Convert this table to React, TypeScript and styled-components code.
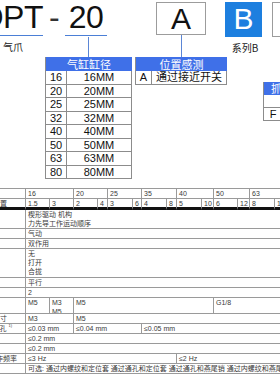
import React from "react";
import styled, { createGlobalStyle } from "styled-components";

const GlobalStyle = createGlobalStyle`
  html, body {
    margin: 0;
    padding: 0;
    background: #fff;
  }
  body {
    font-family: "Liberation Sans", "Noto Sans CJK SC", sans-serif;
  }
`;

const Page = styled.div`
  width: 280px;
  height: 380px;
  overflow: hidden;
  background: #fff;
`;

const Top = styled.div`
  display: flex;
  align-items: flex-start;
  height: 188px;
`;

const Lead = styled.div`
  width: 43px;
  padding-right: 2px;
  flex-shrink: 0;
  display: flex;
  flex-direction: column;
  align-items: flex-end;
`;

const Code = styled.div<{ $pad?: number }>`
  font-size: 32px;
  line-height: 35px;
  height: 35px;
  color: #111;
  border-bottom: 1.5px solid #4b7fd6;
  padding: 0 ${(p) => p.$pad ?? 0}px;
  white-space: nowrap;
  letter-spacing: -0.5px;
`;

const Caption = styled.div<{ $self?: string }>`
  align-self: ${(p) => p.$self ?? "center"};
  font-family: "Noto Sans CJK SC", sans-serif;
  font-size: 10px;
  line-height: 12px;
  color: #222;
  margin: 5px 0 0 3px;
  white-space: nowrap;
`;

const Group = styled.div<{ $w: number; $ml?: number }>`
  width: ${(p) => p.$w}px;
  margin-left: ${(p) => p.$ml ?? 0}px;
  flex-shrink: 0;
  display: flex;
  flex-direction: column;
`;

const HeadRow = styled.div<{ $h: number; $center?: boolean }>`
  height: ${(p) => p.$h}px;
  display: flex;
  align-items: flex-start;
  justify-content: ${(p) => (p.$center ? "center" : "flex-start")};
`;

const Dash = styled.span`
  font-size: 32px;
  line-height: 35px;
  color: #333;
  margin: 0 5px 0 4px;
`;

const Stem = styled.div<{ $h: number }>`
  width: 1px;
  height: ${(p) => p.$h}px;
  background: #5b86d6;
  align-self: center;
`;

const Box = styled.div<{ $fill?: boolean; $w: number; $h: number; $ml?: number }>`
  box-sizing: border-box;
  width: ${(p) => p.$w}px;
  height: ${(p) => p.$h}px;
  margin: 2px 0 0 ${(p) => p.$ml ?? 0}px;
  border: ${(p) => (p.$fill ? "none" : "1px solid #9c9c9c")};
  background: ${(p) => (p.$fill ? "#1d7fdf" : "#fff")};
  color: ${(p) => (p.$fill ? "#fff" : "#111")};
  font-size: 30px;
  line-height: ${(p) => p.$h - 2}px;
  text-align: center;
  flex-shrink: 0;
`;

const SpecTable = styled.div<{ $cols: string; $w?: number; $mt?: number }>`
  display: grid;
  grid-template-columns: ${(p) => p.$cols};
  width: ${(p) => (p.$w ? `${p.$w}px` : "auto")};
  margin-top: ${(p) => p.$mt ?? 0}px;
  border-left: 1px solid #8c8c8c;
  flex-shrink: 0;
`;

const SpecHead = styled.div<{ $h: number }>`
  grid-column: 1 / -1;
  height: ${(p) => p.$h}px;
  line-height: ${(p) => p.$h}px;
  background: #3f70e8;
  color: #fff;
  font-family: "Noto Sans CJK SC", sans-serif;
  font-size: 11px;
  text-align: center;
  white-space: nowrap;
  overflow: hidden;
`;

const SpecCell = styled.div<{ $h: number }>`
  box-sizing: border-box;
  height: ${(p) => p.$h}px;
  line-height: ${(p) => p.$h - 1}px;
  border-right: 1px solid #8c8c8c;
  border-bottom: 1px solid #8c8c8c;
  font-size: 11px;
  color: #111;
  text-align: center;
  white-space: nowrap;
  overflow: hidden;
`;

const MainGrid = styled.div`
  display: grid;
  grid-template-columns: 26px 24px 24px 24px 10px 25px 9px 25px 10px 25px 12px 24px 12px 25px 25px;
  grid-template-rows: 10px 11px 19px 10px 10px 29px 10px 10px 16px 10px 10px 10px 10px 10px 10px;
  width: 300px;
  border-top: 1px solid #9a9a9a;
  font-size: 7px;
  color: #3a3a3a;
`;

const Cell = styled.div<{ $span?: string; $thick?: boolean }>`
  box-sizing: border-box;
  grid-column: ${(p) => p.$span ?? "auto"};
  border-right: 1px solid #9a9a9a;
  border-bottom: ${(p) => (p.$thick ? "3px solid #111" : "1px solid #9a9a9a")};
  padding-left: 2px;
  line-height: 9px;
  white-space: nowrap;
  overflow: hidden;
`;

const Label = styled(Cell)<{ $pr?: number }>`
  display: flex;
  justify-content: flex-end;
  align-items: flex-start;
  padding: 0 ${(p) => p.$pr ?? 0}px 0 0;
`;

const Sup = styled.sup`
  font-size: 4px;
  line-height: 4px;
  margin-left: 2px;
  vertical-align: 3px;
`;

const sizes = ["16", "20", "25", "35", "40", "50", "63"];
const strokes = ["1.5", "3", "2", "4", "3", "6", "4", "8", "5", "10", "6", "12", "8", "16"];
const bores = [16, 20, 25, 32, 40, 50, 63, 80];

export default function App() {
  return (
    <Page>
      <GlobalStyle />
      <Top>
        <Lead>
          <Code>DPT</Code>
          <Caption $self="flex-start">气爪</Caption>
        </Lead>

        <Group $w={86}>
          <HeadRow $h={37}>
            <Dash>-</Dash>
            <Code $pad={4}>20</Code>
          </HeadRow>
          <Stem $h={20} />
          <SpecTable $cols="21px 65px">
            <SpecHead $h={14}>气缸缸径</SpecHead>
            {bores.map((b) => (
              <React.Fragment key={b}>
                <SpecCell $h={13.5}>{b}</SpecCell>
                <SpecCell $h={13.5}>{b}MM</SpecCell>
              </React.Fragment>
            ))}
          </SpecTable>
        </Group>

        <Group $w={92} $ml={4}>
          <HeadRow $h={35} $center>
            <Box $w={50} $h={33}>A</Box>
          </HeadRow>
          <Stem $h={22} />
          <SpecTable $cols="16px 75px">
            <SpecHead $h={14}>位置感测</SpecHead>
            <SpecCell $h={13.5}>A</SpecCell>
            <SpecCell $h={13.5}>通过接近开关</SpecCell>
          </SpecTable>
        </Group>

        <Group $w={37} $ml={-2}>
          <Box $fill $w={37} $h={35}>B</Box>
          <Caption>系列B</Caption>
        </Group>

        <Group $w={70} $ml={1}>
          <Box $w={50} $h={35} $ml={9} />
          <SpecTable $cols="19px 39px" $w={58} $mt={45}>
            <SpecHead $h={13}>抓持方式</SpecHead>
            <SpecCell $h={13} />
            <SpecCell $h={13} />
            <SpecCell $h={13}>F</SpecCell>
            <SpecCell $h={13} />
          </SpecTable>
        </Group>
      </Top>

      <MainGrid>
        <Label />
        {sizes.map((s) => (
          <Cell key={s} $span="span 2">
            {s}
          </Cell>
        ))}

        <Label $thick $pr={18}>
          每个夹爪行程位置
        </Label>
        {strokes.map((s, i) => (
          <Cell key={i} $thick>
            {s}
          </Cell>
        ))}

        <Label />
        <Cell $span="2 / -1">
          楔形驱动 机构
          <br />
          力先导工作运动顺序
        </Cell>

        <Label />
        <Cell $span="2 / -1">气动</Cell>

        <Label />
        <Cell $span="2 / -1">双作用</Cell>

        <Label />
        <Cell $span="2 / -1">
          无
          <br />
          打开
          <br />
          合拢
        </Cell>

        <Label />
        <Cell $span="2 / -1">平行</Cell>

        <Label />
        <Cell $span="2 / -1">2</Cell>

        <Label />
        <Cell>M5</Cell>
        <Cell>
          M3
          <br />
          M5
        </Cell>
        <Cell $span="4 / 12">M5</Cell>
        <Cell $span="12 / -1">G1/8</Cell>

        <Label $pr={18}>气接口尺寸</Label>
        <Cell $span="2 / 4">M3</Cell>
        <Cell $span="4 / -1">M5</Cell>

        <Label $pr={13}>
          通过定位孔
          <Sup>1)</Sup>
        </Label>
        <Cell $span="2 / 4">≤0.03 mm</Cell>
        <Cell $span="4 / 8">≤0.04 mm</Cell>
        <Cell $span="8 / -1">≤0.05 mm</Cell>

        <Label />
        <Cell $span="2 / -1">≤0.2 mm</Cell>

        <Label />
        <Cell $span="2 / -1">≤0.2 mm</Cell>

        <Label $pr={8}>最大工作频率</Label>
        <Cell $span="2 / 10">≤3 Hz</Cell>
        <Cell $span="10 / -1">≤2 Hz</Cell>

        <Label />
        <Cell $span="2 / -1">
          可选: 通过内螺纹和定位套 通过通孔和定位套 通过通孔和燕尾销 通过内螺纹和燕尾销
        </Cell>
      </MainGrid>
    </Page>
  );
}
